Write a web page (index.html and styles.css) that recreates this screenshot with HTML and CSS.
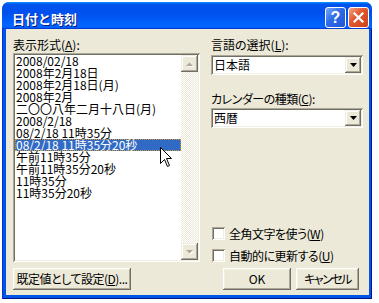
FILE: index.html
```html
<!DOCTYPE html>
<html lang="ja">
<head>
<meta charset="utf-8">
<title>日付と時刻</title>
<link rel="stylesheet" href="styles.css">
</head>
<body>
<div class="window">
  <div class="titlebar">
    <span class="title">日付と時刻</span>
    <div class="tb-buttons">
      <div class="tb-btn help">?</div>
      <div class="tb-btn close">
        <svg width="13" height="13" viewBox="0 0 13 13"><path d="M2.5 2.5 L10.5 10.5 M10.5 2.5 L2.5 10.5" stroke="#fff" stroke-width="2.2" stroke-linecap="square"/></svg>
      </div>
    </div>
  </div>
  <div class="frame">
    <div class="face">
      <div class="col-left">
        <div class="label">表示形式(<u>A</u>):</div>
        <div class="listbox">
          <div class="items">
            <div class="item">2008/02/18</div>
            <div class="item">2008年2月18日</div>
            <div class="item">2008年2月18日(月)</div>
            <div class="item">2008年2月</div>
            <div class="item">二〇〇八年二月十八日(月)</div>
            <div class="item">2008/2/18</div>
            <div class="item">08/2/18 11時35分</div>
            <div class="item selected">08/2/18 11時35分20秒</div>
            <div class="item">午前11時35分</div>
            <div class="item">午前11時35分20秒</div>
            <div class="item">11時35分</div>
            <div class="item">11時35分20秒</div>
          </div>
          <div class="vscroll">
            <div class="sbtn">
              <svg width="9" height="6" viewBox="0 0 9 6"><path d="M1 5 L8 5 L4.5 1.5 Z" fill="#fff" transform="translate(1,1)"/><path d="M1 5 L8 5 L4.5 1.5 Z" fill="#ACA899"/></svg>
            </div>
            <div class="track"></div>
            <div class="sbtn">
              <svg width="9" height="6" viewBox="0 0 9 6"><path d="M1 1 L8 1 L4.5 4.5 Z" fill="#fff" transform="translate(1,1)"/><path d="M1 1 L8 1 L4.5 4.5 Z" fill="#ACA899"/></svg>
            </div>
          </div>
          <svg class="cursor" width="13" height="21" viewBox="0 0 13 21"><path d="M0.5 0.5 L0.5 16.5 L4.5 12.5 L7.5 19.5 L9.5 18.5 L6.5 11.5 L11.5 11.5 Z" fill="#fff" stroke="#000" stroke-width="1" stroke-linejoin="miter"/></svg>
        </div>
        <div class="btn btn-default"><span class="btn-text tight">既定値として設定(<u>D</u>)...</span></div>
      </div>
      <div class="col-right">
        <div class="label">言語の選択(<u>L</u>):</div>
        <div class="combo combo-first">
          <span class="combo-text">日本語</span>
          <div class="combo-btn"><svg width="7" height="4" viewBox="0 0 7 4"><path d="M0 0 L7 0 L3.5 4 Z" fill="#000"/></svg></div>
        </div>
        <div class="label label-second">カレンダーの種類(<u>C</u>):</div>
        <div class="combo">
          <span class="combo-text">西暦</span>
          <div class="combo-btn"><svg width="7" height="4" viewBox="0 0 7 4"><path d="M0 0 L7 0 L3.5 4 Z" fill="#000"/></svg></div>
        </div>
        <div class="checks">
          <div class="check-row"><span class="checkbox"></span><span class="check-label">全角文字を使う(<u>W</u>)</span></div>
          <div class="check-row"><span class="checkbox"></span><span class="check-label">自動的に更新する(<u>U</u>)</span></div>
        </div>
        <div class="btn-row">
          <div class="btn btn-ok"><span class="btn-text">OK</span></div>
          <div class="btn btn-cancel"><span class="btn-text kana">キャンセル</span></div>
        </div>
      </div>
    </div>
  </div>
</div>
</body>
</html>
```

FILE: styles.css
```css
* { box-sizing: border-box; }
html, body { margin: 0; padding: 0; background: #fff; }
body {
  font-family: "Noto Sans CJK JP", "Liberation Sans", sans-serif;
  font-size: 12px;
  color: #000;
}
u { text-decoration: underline; text-underline-offset: 1px; }

.window {
  margin: 2px 0 0 2px;
  width: 370px;
  height: 297px;
  display: flex;
  flex-direction: column;
  border-radius: 7px 7px 0 0;
  overflow: hidden;
  background: #0055E5;
}

.titlebar {
  height: 27px;
  flex: none;
  display: flex;
  padding: 0 3px 0 10px;
  background: linear-gradient(180deg, #0997ff, #0053ee 8%, #0050ee 40%, #0066ff 88%, #0066ff 93%, #005bff 95%, #003dd7 96%, #003dd7);
}
.title {
  flex: 1;
  margin-top: 9px;
  line-height: 15px;
  height: 15px;
  color: #fff;
  font-weight: 700;
  font-size: 13px;
  text-shadow: 1px 1px #0A1883;
}
.tb-buttons { display: flex; gap: 2px; margin-top: 5px; }
.tb-btn {
  width: 21px;
  height: 21px;
  border: 1px solid #fff;
  border-radius: 3px;
  display: flex;
  align-items: center;
  justify-content: center;
}
.help {
  background: linear-gradient(135deg, #7CA8FA 0%, #2E6BE8 45%, #1F54D6 100%);
  color: #fff;
  font: bold 16px/19px "Liberation Sans", sans-serif;
}
.close {
  background: linear-gradient(135deg, #F2A58A 0%, #E25A32 40%, #CD4119 100%);
}

.frame {
  flex: 1;
  display: flex;
  padding: 0 3px 4px 4px;
  background: #0055E5;
  box-shadow: inset 1px 0 #0831D9, inset -1px -1px #00138C;
}
.face {
  flex: 1;
  background: #ECE9D8;
  display: flex;
  gap: 11px;
  padding: 9px 6px 5px 7px;
}

.label {
  height: 14px;
  line-height: 14px;
  white-space: nowrap;
  font-feature-settings: "palt";
}

.col-left { width: 187px; display: flex; flex-direction: column; }
.col-right { flex: 1; display: flex; flex-direction: column; }

.listbox {
  position: relative;
  margin-top: 1px;
  height: 209px;
  display: flex;
  padding: 2px;
  background: #fff;
  box-shadow: inset 1px 1px #ACA899, inset -1px -1px #fff, inset 2px 2px #716F64, inset -2px -2px #F1EFE2;
}
.items { width: 166px; }
.item {
  height: 12px;
  line-height: 12px;
  padding-left: 1px;
  white-space: nowrap;
}
.item.selected {
  background: #316AC5;
  color: #fff;
  outline: 1px dotted #CE953A;
  outline-offset: -1px;
}
.vscroll { width: 17px; display: flex; flex-direction: column; }
.sbtn {
  height: 17px;
  flex: none;
  background: #ECE9D8;
  display: flex;
  align-items: center;
  justify-content: center;
  box-shadow: inset -1px -1px #716F64, inset 1px 1px #F1EFE2, inset -2px -2px #ACA899, inset 2px 2px #fff;
}
.track {
  flex: 1;
  background-color: #ECE9D8;
  background-image: repeating-conic-gradient(#fff 0 25%, #ECE9D8 0 50%);
  background-size: 2px 2px;
}
.cursor { position: absolute; left: 147px; top: 94px; }

.btn {
  height: 22px;
  display: flex;
  align-items: center;
  justify-content: center;
  background: #ECE9D8;
  white-space: nowrap;
  line-height: 14px;
  box-shadow: inset -1px -1px #716F64, inset 1px 1px #fff, inset -2px -2px #ACA899, inset 2px 2px #F1EFE2;
}
.btn-text { font-feature-settings: "palt"; }
.btn-text.tight { letter-spacing: -0.5px; }
.btn-text.kana { letter-spacing: -1.5px; }
.btn-default { margin-top: 6px; width: 118px; }

.combo {
  height: 20px;
  margin-top: 2px;
  display: flex;
  padding: 2px;
  background: #fff;
  box-shadow: inset 1px 1px #ACA899, inset -1px -1px #fff, inset 2px 2px #716F64, inset -2px -2px #F1EFE2;
}
.combo-first { margin-top: 3px; }
.combo-text { flex: 1; line-height: 16px; padding-left: 1px; }
.combo-btn {
  width: 16px;
  background: #ECE9D8;
  display: flex;
  align-items: center;
  justify-content: center;
  box-shadow: inset -1px -1px #716F64, inset 1px 1px #F1EFE2, inset -2px -2px #ACA899, inset 2px 2px #fff;
}
.label-second { margin-top: 17px; letter-spacing: -0.5px; }

.checks { margin-top: auto; display: flex; flex-direction: column; gap: 9px; padding-left: 1px; }
.check-row { display: flex; align-items: center; gap: 4px; height: 13px; line-height: 13px; white-space: nowrap; }
.check-label { font-feature-settings: "palt"; letter-spacing: -0.5px; }
.checkbox {
  width: 13px;
  height: 13px;
  flex: none;
  background: #fff;
  box-shadow: inset 1px 1px #ACA899, inset -1px -1px #fff, inset 2px 2px #716F64, inset -2px -2px #F1EFE2;
}

.btn-row { margin-top: 6px; display: flex; gap: 5px; padding-left: 12px; }
.btn-ok { width: 68px; }
.btn-cancel { width: 63px; }
```
